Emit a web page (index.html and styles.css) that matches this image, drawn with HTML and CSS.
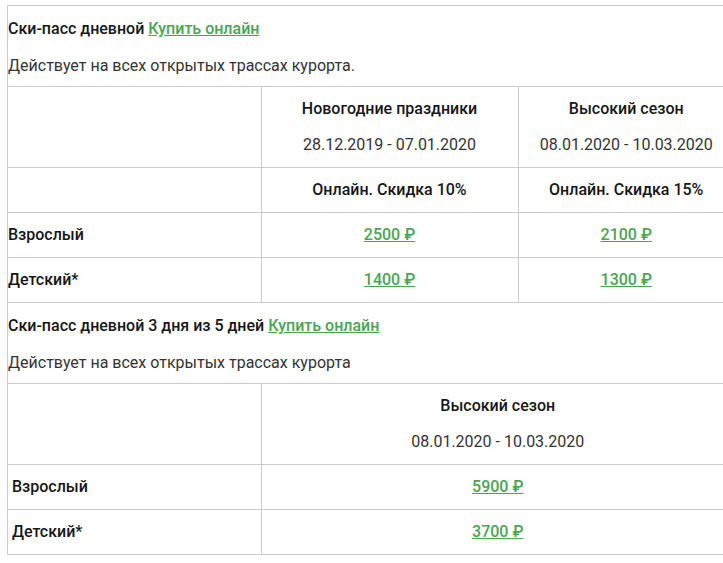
FILE: index.html
```html
<!DOCTYPE html>
<html lang="ru">
<head>
<meta charset="utf-8">
<title>Ски-пасс</title>
<link rel="stylesheet" href="styles.css">
</head>
<body>
<div class="frame">
  <div class="intro">
    <div class="title">Ски-пасс дневной <a href="#" class="buy">Купить онлайн</a></div>
    <div class="desc">Действует на всех открытых трассах курорта.</div>
  </div>
  <table class="prices">
    <colgroup><col class="c1"><col class="c2"><col class="c3"></colgroup>
    <tr class="head">
      <td></td>
      <td><div class="season">Новогодние праздники</div><div class="dates">28.12.2019 - 07.01.2020</div></td>
      <td><div class="season">Высокий сезон</div><div class="dates">08.01.2020 - 10.03.2020</div></td>
    </tr>
    <tr>
      <td></td>
      <td class="bold">Онлайн. Скидка 10%</td>
      <td class="bold">Онлайн. Скидка 15%</td>
    </tr>
    <tr>
      <td class="label">Взрослый</td>
      <td><a href="#" class="price">2500 ₽</a></td>
      <td><a href="#" class="price">2100 ₽</a></td>
    </tr>
    <tr>
      <td class="label">Детский*</td>
      <td><a href="#" class="price">1400 ₽</a></td>
      <td><a href="#" class="price">1300 ₽</a></td>
    </tr>
  </table>
  <div class="intro">
    <div class="title">Ски-пасс дневной 3 дня из 5 дней <a href="#" class="buy">Купить онлайн</a></div>
    <div class="desc">Действует на всех открытых трассах курорта</div>
  </div>
  <table class="prices second">
    <colgroup><col class="c1"><col></colgroup>
    <tr class="head">
      <td></td>
      <td><div class="season">Высокий сезон</div><div class="dates">08.01.2020 - 10.03.2020</div></td>
    </tr>
    <tr>
      <td class="label">Взрослый</td>
      <td><a href="#" class="price">5900 ₽</a></td>
    </tr>
    <tr>
      <td class="label">Детский*</td>
      <td><a href="#" class="price">3700 ₽</a></td>
    </tr>
  </table>
</div>
</body>
</html>
```
FILE: styles.css
```css
html, body {
  margin: 0;
  padding: 0;
  overflow: hidden;
  background: #fff;
}
body {
  font-family: Roboto, "Noto Sans", sans-serif;
  font-size: 16px;
  line-height: 24px;
  color: #1b1b1b;
}
.frame {
  margin: 5px 0 0 7px;
  width: 726px;
  border: 1px solid #cccccc;
  border-bottom: none;
}
.intro {
  padding: 11px 0 8px 0;
}
.title {
  font-weight: 500;
  color: #161616;
}
.desc {
  margin-top: 13px;
  color: #333;
}
.buy {
  color: #4aa552;
  text-decoration: underline;
}
.prices {
  width: 100%;
  border-collapse: collapse;
  table-layout: fixed;
  border-left: hidden;
  border-right: hidden;
}
.prices td {
  border: 1px solid #cccccc;
  padding: 10px 0;
  text-align: center;
  vertical-align: middle;
}
.prices .c1 { width: 253px; }
.prices .c2 { width: 257px; }
.prices td.label {
  text-align: left;
  font-weight: 500;
  color: #161616;
}
.second td.label {
  padding-left: 4px;
}
.season {
  font-weight: 500;
  color: #161616;
}
.dates {
  margin-top: 12px;
  color: #333;
}
.bold {
  font-weight: 500;
  color: #161616;
}
.price {
  color: #4aa552;
  font-weight: 500;
  text-decoration: underline;
}
```
